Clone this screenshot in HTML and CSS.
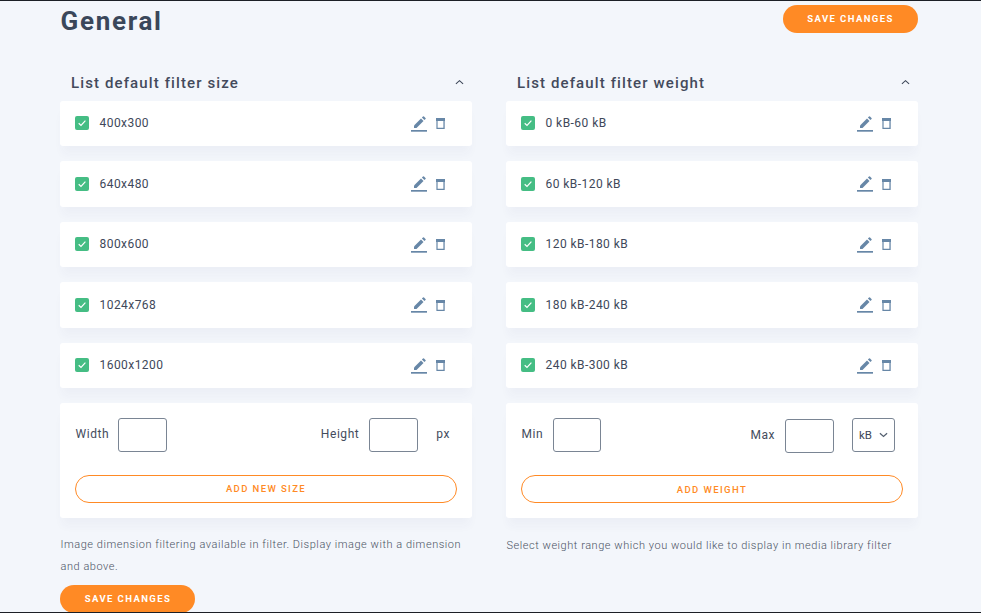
FILE: index.html
```html
<!DOCTYPE html>
<html lang="en">
<head>
<meta charset="utf-8">
<title>General</title>
<link rel="stylesheet" href="styles.css">
</head>
<body>
<svg class="defs" width="0" height="0" aria-hidden="true">
  <symbol id="pen" viewBox="0 0 16 16">
    <path d="M3 12V9.500L10 2.500 12.500 5 5.500 12z"/>
    <path d="M10.900 1.600 12 .5a.7.7 0 0 1 1 0l1.500 1.500a.7.7 0 0 1 0 1L13.400 4.100z"/>
    <rect x="0" y="14" width="16" height="1.700"/>
  </symbol>
  <symbol id="bin" viewBox="0 0 9 11">
    <path fill-rule="evenodd" d="M0 0h9v3h-.3V11H.4V3H0zM1.600 3V9.800h5.800V3z"/>
  </symbol>
  <symbol id="tick" viewBox="0 0 14 14">
    <path d="M3.700 7.300 6 9.500l4.400-4.800" fill="none" stroke="#fff" stroke-width="1.200"/>
  </symbol>
</svg>
<main class="page">
  <header class="top">
    <h1 class="title">General</h1>
    <button class="save" type="button">SAVE CHANGES</button>
  </header>
  <div class="cols">
    <section class="col">
      <div class="head"><h2>List default filter size</h2><svg class="caret" viewBox="0 0 10 6"><path d="M1 5l4-3.500L9 5"/></svg></div>
      <ul class="list">
        <li class="row"><span class="check"><svg><use href="#tick"/></svg></span><span class="name">400x300</span><svg class="pen"><use href="#pen"/></svg><svg class="bin"><use href="#bin"/></svg></li>
        <li class="row"><span class="check"><svg><use href="#tick"/></svg></span><span class="name">640x480</span><svg class="pen"><use href="#pen"/></svg><svg class="bin"><use href="#bin"/></svg></li>
        <li class="row"><span class="check"><svg><use href="#tick"/></svg></span><span class="name">800x600</span><svg class="pen"><use href="#pen"/></svg><svg class="bin"><use href="#bin"/></svg></li>
        <li class="row"><span class="check"><svg><use href="#tick"/></svg></span><span class="name">1024x768</span><svg class="pen"><use href="#pen"/></svg><svg class="bin"><use href="#bin"/></svg></li>
        <li class="row"><span class="check"><svg><use href="#tick"/></svg></span><span class="name">1600x1200</span><svg class="pen"><use href="#pen"/></svg><svg class="bin"><use href="#bin"/></svg></li>
      </ul>
      <form class="card">
        <div class="fields">
          <label class="lbl">Width</label><input class="box gap-w" type="text">
          <label class="lbl push">Height</label><input class="box gap-h" type="text">
          <span class="lbl unit">px</span>
        </div>
        <button class="add" type="button">ADD NEW SIZE</button>
      </form>
      <p class="note">Image dimension filtering available in filter. Display image with a dimension and above.</p>
      <button class="save low" type="button">SAVE CHANGES</button>
    </section>
    <section class="col">
      <div class="head"><h2>List default filter weight</h2><svg class="caret" viewBox="0 0 10 6"><path d="M1 5l4-3.500L9 5"/></svg></div>
      <ul class="list">
        <li class="row"><span class="check"><svg><use href="#tick"/></svg></span><span class="name">0 kB-60 kB</span><svg class="pen"><use href="#pen"/></svg><svg class="bin"><use href="#bin"/></svg></li>
        <li class="row"><span class="check"><svg><use href="#tick"/></svg></span><span class="name">60 kB-120 kB</span><svg class="pen"><use href="#pen"/></svg><svg class="bin"><use href="#bin"/></svg></li>
        <li class="row"><span class="check"><svg><use href="#tick"/></svg></span><span class="name">120 kB-180 kB</span><svg class="pen"><use href="#pen"/></svg><svg class="bin"><use href="#bin"/></svg></li>
        <li class="row"><span class="check"><svg><use href="#tick"/></svg></span><span class="name">180 kB-240 kB</span><svg class="pen"><use href="#pen"/></svg><svg class="bin"><use href="#bin"/></svg></li>
        <li class="row"><span class="check"><svg><use href="#tick"/></svg></span><span class="name">240 kB-300 kB</span><svg class="pen"><use href="#pen"/></svg><svg class="bin"><use href="#bin"/></svg></li>
      </ul>
      <form class="card">
        <div class="fields">
          <label class="lbl">Min</label><input class="box gap-min" type="text">
          <label class="lbl push max">Max</label><input class="box gap-max" type="text">
          <span class="select">kB<svg viewBox="0 0 10 6"><path d="M1 1l4 3.500L9 1"/></svg></span>
        </div>
        <button class="add weight" type="button">ADD WEIGHT</button>
      </form>
      <p class="note tight">Select weight range which you would like to display in media library filter</p>
    </section>
  </div>
</main>
</body>
</html>
```
FILE: styles.css
```css
* { box-sizing: border-box; }
html, body { margin: 0; height: 100%; overflow: hidden; }
body { background: #f3f6fb; font-family: Roboto, "Liberation Sans", sans-serif; color: #3d4759; }
.defs { position: absolute; }
.page { height: 613px; overflow: hidden; border-top: 1px solid #1c1f26; border-bottom: 1px solid #1c1f26; padding: 0 63px 0 60px; }
.top { display: flex; justify-content: space-between; align-items: flex-start; height: 69px; padding-top: 4px; }
.title { margin: 1px 0 0; padding-left: .5px; font-size: 26px; line-height: 30px; font-weight: 700; letter-spacing: 1.700px; color: #3a475a; }
.save { width: 135px; height: 28px; flex: none; border: 0; border-radius: 14px; padding: 0; background: #ff8a25; color: #fff; font: 700 9.500px/28px Roboto, sans-serif; letter-spacing: 1.400px; }
.low { display: block; margin-top: 6.500px; padding-left: 1px; }
.cols { display: grid; grid-template-columns: 412px 412px; column-gap: 34px; }
.head { display: flex; justify-content: space-between; align-items: center; height: 30.600px; padding: 0 8px 4.600px 11px; }
.head h2 { margin: 0; font-size: 15px; font-weight: 500; letter-spacing: 1.120px; color: #434a5c; }
.caret { width: 9px; height: 6px; margin-top: -3px; fill: none; stroke: #3c4658; stroke-width: 1.200; }
.list { margin: 0; padding: 0; list-style: none; display: flex; flex-direction: column; gap: 15px; }
.row, .card { background: #fff; border-radius: 3px; box-shadow: 0 10px 10px -2px rgba(50, 70, 120, .035); }
.row { display: flex; align-items: center; height: 45.500px; padding: 0 0 0 15px; }
.check { width: 14px; height: 14px; border-radius: 2px; background: #45bd84; }
.check svg { display: block; width: 14px; height: 14px; }
.name { flex: 1; margin-left: 10.500px; font-size: 12px; letter-spacing: .45px; color: #40485a; }
.pen { width: 16px; height: 16px; fill: #6787a7; margin-right: 9px; margin-top: 1px; }
.bin { width: 9px; height: 11px; fill: #6787a7; margin-right: 27px; margin-top: 1px; }
.card { margin-top: 15px; height: 115px; padding: 15px 15px 0; }
.fields { display: flex; align-items: center; height: 34px; }
.lbl { font-size: 12px; font-weight: 400; letter-spacing: .55px; color: #444c5d; margin-top: -3px; }
.fields > .lbl:first-child { margin-left: .5px; }
.push { margin-left: auto; }
.max { margin-top: -1px; }
.box { width: 49px; height: 34px; padding: 0; border: 1px solid #7a8594; border-radius: 3px; background: #fff; }
.gap-w { margin-left: 9px; }
.gap-h { margin-left: 10px; }
.unit { margin-left: 18px; margin-right: 7px; }
.gap-min { margin-left: 10px; width: 48px; }
.gap-max { margin-left: 10px; margin-top: 1px; }
.select { display: flex; align-items: center; justify-content: space-between; width: 43px; height: 34px; margin-left: 18px; margin-right: 8px; padding: 0 6px; border: 1px solid #7a8594; border-radius: 3px; font-size: 11.500px; color: #3d4759; }
.select svg { width: 9px; height: 6px; fill: none; stroke: #556070; stroke-width: 1.400; }
.add { display: block; width: 100%; height: 28px; margin-top: 23px; padding: 0; border: 1px solid #ff8a25; border-radius: 14px; background: #fff; color: #ff8a25; font: 500 9.500px/26px Roboto, sans-serif; letter-spacing: 1.400px; }
.weight { padding-top: 1px; }
.note { margin: 16px 0 0; padding-left: .5px; font-size: 11px; font-weight: 300; line-height: 22px; letter-spacing: .54px; color: #4a5263; }
.tight { margin-top: 17px; }
```
